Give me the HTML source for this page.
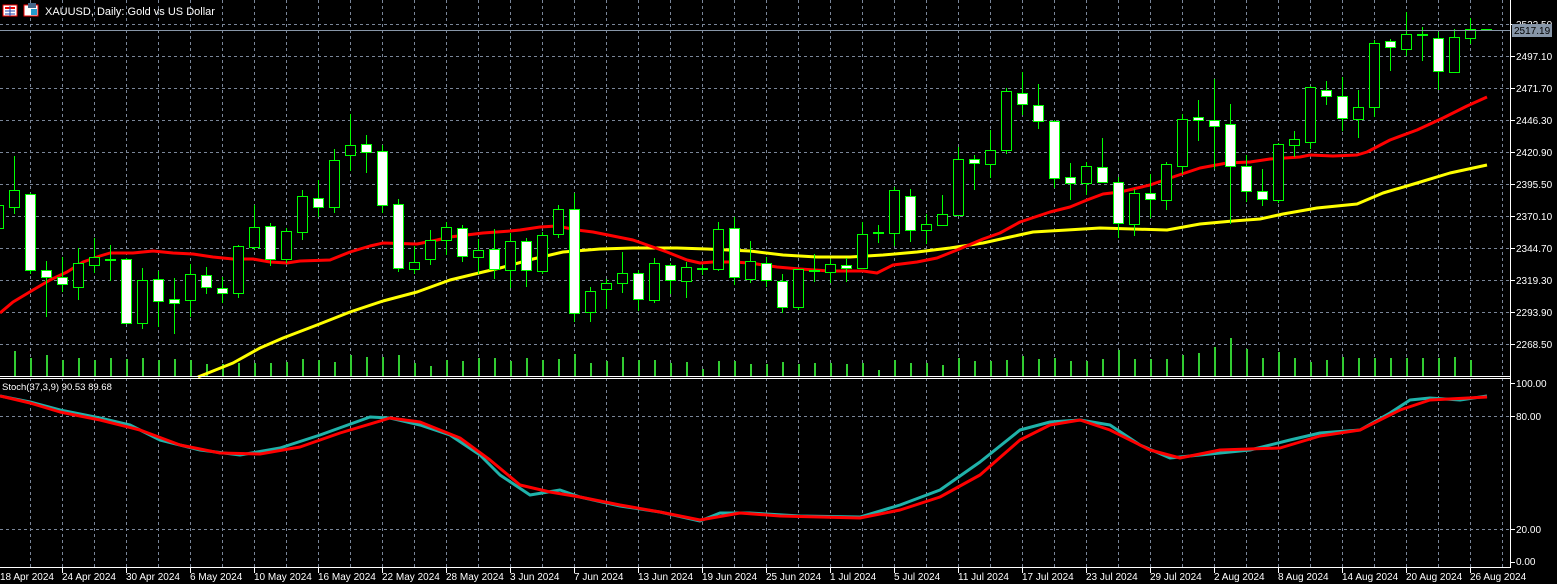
<!DOCTYPE html>
<html><head><meta charset="utf-8"><style>
html,body{margin:0;padding:0;background:#000;width:1557px;height:584px;overflow:hidden}
svg{display:block}
text{font-family:"Liberation Sans",sans-serif;font-size:10px;fill:#fff}
</style></head><body>
<svg id="s" width="1557" height="584" xmlns="http://www.w3.org/2000/svg">
<rect width="1557" height="584" fill="#000"/>
<g id="grid"></g>
<g id="vol"></g>
<g id="ma"></g>
<g id="cnd"></g>
<g id="st"></g>
<!-- current price line -->
<line x1="0" y1="30.5" x2="1510" y2="30.5" stroke="#8796a8" stroke-width="1"/>
<!-- panel borders -->
<line x1="0" y1="376.5" x2="1511" y2="376.5" stroke="#fff"/>
<line x1="0" y1="378.5" x2="1511" y2="378.5" stroke="#fff"/>
<line x1="0" y1="567.5" x2="1511" y2="567.5" stroke="#fff"/>
<line x1="1510.5" y1="0" x2="1510.5" y2="568" stroke="#fff"/>
<!-- title -->
<g>
<rect x="3" y="5" width="14" height="11" fill="#fff" stroke="#e00" stroke-width="1"/>
<line x1="5" y1="8" x2="15" y2="8" stroke="#e00" stroke-width="2"/><line x1="5" y1="11" x2="15" y2="11" stroke="#24a"/><line x1="5" y1="14" x2="15" y2="14" stroke="#24a"/>
<line x1="10" y1="6" x2="10" y2="16" stroke="#24a"/>
<rect x="24" y="5" width="14" height="11" fill="#fff" stroke="#e00"/>
<rect x="28" y="3" width="8" height="5" fill="#468"/>
<rect x="31" y="9" width="6" height="6" fill="#29c"/>
</g>
<text x="45" y="15" style="font-size:11px">XAUUSD, Daily:  Gold vs US Dollar</text>
<text x="2" y="390" style="font-size:9.5px">Stoch(37,3,9) 90.53 89.68</text>
<!-- price axis -->
<g id="pax"></g>
<text x="1516" y="28">2522.50</text>
<text x="1516" y="60">2497.10</text>
<text x="1516" y="92">2471.70</text>
<text x="1516" y="124">2446.30</text>
<text x="1516" y="156">2420.90</text>
<text x="1516" y="188">2395.50</text>
<text x="1516" y="220">2370.10</text>
<text x="1516" y="252">2344.70</text>
<text x="1516" y="284">2319.30</text>
<text x="1516" y="316">2293.90</text>
<text x="1516" y="348">2268.50</text>
<rect x="1512" y="24" width="40" height="13" fill="#8796a8"/>
<text x="1514" y="34" style="fill:#000">2517.19</text>
<text x="1516" y="387">100.00</text>
<text x="1516" y="420">80.00</text>
<text x="1516" y="533">20.00</text>
<text x="1516" y="565">0.00</text>
<!-- date axis -->
<g id="dax"></g>
<text x="0" y="580">18 Apr 2024</text>
<text x="62" y="580">24 Apr 2024</text>
<text x="126" y="580">30 Apr 2024</text>
<text x="190" y="580">6 May 2024</text>
<text x="254" y="580">10 May 2024</text>
<text x="318" y="580">16 May 2024</text>
<text x="382" y="580">22 May 2024</text>
<text x="446" y="580">28 May 2024</text>
<text x="510" y="580">3 Jun 2024</text>
<text x="574" y="580">7 Jun 2024</text>
<text x="638" y="580">13 Jun 2024</text>
<text x="702" y="580">19 Jun 2024</text>
<text x="766" y="580">25 Jun 2024</text>
<text x="830" y="580">1 Jul 2024</text>
<text x="894" y="580">5 Jul 2024</text>
<text x="958" y="580">11 Jul 2024</text>
<text x="1022" y="580">17 Jul 2024</text>
<text x="1086" y="580">23 Jul 2024</text>
<text x="1150" y="580">29 Jul 2024</text>
<text x="1214" y="580">2 Aug 2024</text>
<text x="1278" y="580">8 Aug 2024</text>
<text x="1342" y="580">14 Aug 2024</text>
<text x="1406" y="580">20 Aug 2024</text>
<text x="1470" y="580">26 Aug 2024</text>
</svg>
<script>
var NS="http://www.w3.org/2000/svg";
function el(p,t,a){var e=document.createElementNS(NS,t);for(var k in a)e.setAttribute(k,a[k]);document.getElementById(p).appendChild(e);return e;}
var gc="#7a8699";
// vertical grid
for(var x=30;x<1510;x+=32){el("grid","line",{x1:x+.5,y1:0,x2:x+.5,y2:567,stroke:gc,"stroke-dasharray":"3,3"});}
// horizontal grid main
for(var y=24;y<=344;y+=32){el("grid","line",{x1:0,y1:y+.5,x2:1510,y2:y+.5,stroke:gc,"stroke-dasharray":"3,3"});
 el("pax","line",{x1:1510,y1:y+.5,x2:1515,y2:y+.5,stroke:"#fff"});}
[416,529].forEach(function(y){el("grid","line",{x1:0,y1:y+.5,x2:1510,y2:y+.5,stroke:gc,"stroke-dasharray":"3,3"});el("pax","line",{x1:1510,y1:y+.5,x2:1515,y2:y+.5,stroke:"#fff"});});
[383,562].forEach(function(y){el("pax","line",{x1:1510,y1:y+.5,x2:1515,y2:y+.5,stroke:"#fff"});});
for(var x=62;x<1510;x+=64){el("dax","line",{x1:x+.5,y1:567,x2:x+.5,y2:573,stroke:"#fff"});}
// volume
var vol={"-2":352,14:351,30:358,46:355,62:360,78:358,94:360,110:358,126:359,142:358,158:360,174:359,190:360,206:364,222:364,238:363,254:363,270:363,286:362,302:359,318:360,334:362,350:355,366:357,382:357,398:355,414:363,430:366,446:360,462:361,478:358,494:358,510:361,526:358,542:360,558:359,574:354,590:363,606:361,622:357,638:360,654:360,670:363,686:362,702:369,718:361,734:361,750:364,766:364,782:362,798:364,814:363,830:363,846:364,862:363,878:370,894:360,910:363,926:363,942:365,958:358,974:361,990:361,1006:360,1022:356,1038:359,1054:358,1070:361,1086:361,1102:359,1118:350,1134:359,1150:359,1166:359,1182:355,1198:353,1214:347,1230:338,1246:349,1262:358,1278:352,1294:358,1310:362,1326:360,1342:357,1358:358,1374:358,1390:358,1406:358,1422:358,1438:358,1454:357,1470:360};
for(var k in vol){el("vol","rect",{x:+k,y:vol[k],width:2,height:376-vol[k],fill:"#32cd32"});}
// MAs
function pl(g,pts,c,w){el(g,"polyline",{points:pts.map(function(p){return p.join(",")}).join(" "),fill:"none",stroke:c,"stroke-width":w,"stroke-linejoin":"round"});}
var yel=[[198,377],[233,363],[260,348],[283,338],[317,325],[350,312],[383,301],[417,292],[450,280],[483,272],[500,268],[533,259],[563,252],[600,249],[633,248],[677,248],[707,249],[750,251],[783,255],[817,257],[850,257],[883,255],[917,252],[950,248],[983,243],[1010,237],[1033,232],[1067,230],[1100,228],[1133,229],[1167,230],[1200,224],[1233,221],[1260,219],[1283,214],[1317,208],[1357,204],[1383,193],[1417,183],[1450,173],[1487,165]];
var red=[[0,313],[13,302],[33,290],[50,280],[67,272],[83,262],[100,256],[110,253],[133,253],[153,251],[173,253],[193,254],[213,257],[233,259],[253,259],[270,262],[287,263],[300,261],[330,260],[350,252],[370,246],[383,243],[417,244],[437,240],[450,237],[483,233],[510,231],[520,230],[540,227],[557,226],[577,230],[593,232],[613,236],[633,240],[650,246],[667,252],[687,260],[700,263],[713,262],[733,262],[750,263],[777,267],[800,269],[830,271],[863,271],[877,273],[893,265],[917,262],[937,258],[957,250],[983,239],[1000,233],[1020,222],[1050,212],[1070,207],[1087,200],[1103,194],[1120,192],[1150,185],[1173,177],[1200,168],[1227,163],[1250,162],[1270,159],[1300,157],[1310,155],[1333,156],[1357,155],[1367,152],[1390,140],[1417,130],[1443,118],[1467,106],[1487,97]];
pl("ma",yel,"#ffff00",3);pl("ma",red,"#ff0000",3);
// candles [x,high,low,top,bot,type]
var C=[[-2,200,232,205,228,"b"],[14,156,213,190,207,"b"],[30,193,273,194,270,"w"],[46,261,316,270,277,"w"],[62,257,291,277,284,"w"],[78,248,299,263,287,"b"],[94,238,272,257,265,"b"],[110,245,280,260,260,"d"],[126,258,323,259,323,"w"],[142,268,328,280,323,"b"],[158,271,326,279,301,"w"],[174,278,333,299,303,"w"],[190,264,316,274,300,"b"],[206,267,293,275,287,"w"],[222,277,302,288,293,"w"],[238,245,297,246,293,"b"],[254,205,249,227,247,"b"],[270,223,265,226,259,"w"],[286,228,262,231,259,"b"],[302,190,239,196,232,"b"],[318,180,216,198,207,"w"],[334,149,212,160,207,"b"],[350,114,170,145,155,"b"],[366,135,172,144,152,"w"],[382,145,212,151,205,"w"],[398,199,271,204,268,"w"],[414,246,273,262,269,"b"],[430,230,264,240,259,"b"],[446,222,254,227,240,"b"],[462,225,261,228,256,"w"],[478,239,273,250,257,"b"],[494,229,278,249,269,"w"],[510,233,287,241,270,"b"],[526,238,286,241,270,"w"],[542,232,273,235,271,"b"],[558,205,237,209,234,"b"],[574,193,321,209,313,"w"],[590,287,321,291,312,"b"],[606,279,308,283,289,"b"],[622,252,292,273,283,"b"],[638,270,310,273,299,"w"],[654,258,302,263,300,"b"],[670,263,293,265,280,"w"],[686,262,297,267,281,"b"],[702,265,274,269,269,"d"],[718,222,270,229,269,"b"],[734,217,284,228,277,"w"],[750,241,282,261,279,"b"],[766,257,286,263,280,"w"],[782,274,312,281,307,"w"],[798,269,309,269,307,"b"],[814,254,281,271,271,"d"],[830,259,282,264,272,"b"],[846,258,281,265,268,"w"],[862,222,268,234,268,"b"],[878,225,242,233,233,"d"],[894,187,245,190,233,"b"],[910,189,241,196,230,"w"],[926,214,243,224,230,"b"],[942,195,225,214,225,"b"],[958,147,215,159,215,"b"],[974,155,189,159,163,"w"],[990,130,177,150,164,"b"],[1006,88,153,91,150,"b"],[1022,72,114,93,104,"w"],[1038,84,128,105,121,"w"],[1054,120,187,121,178,"w"],[1070,163,199,177,183,"w"],[1086,162,194,166,183,"b"],[1102,138,182,167,182,"w"],[1118,177,237,182,223,"w"],[1134,189,235,193,224,"b"],[1150,174,217,193,199,"w"],[1166,162,209,164,200,"b"],[1182,114,173,119,166,"b"],[1198,100,140,117,120,"w"],[1214,79,168,120,126,"w"],[1230,104,223,124,166,"w"],[1246,155,201,166,191,"w"],[1262,169,205,191,199,"w"],[1278,143,202,144,200,"b"],[1294,131,156,139,145,"b"],[1310,86,148,87,142,"b"],[1326,81,104,90,96,"w"],[1342,77,130,96,118,"w"],[1358,90,137,107,119,"b"],[1374,40,116,43,107,"b"],[1390,39,70,41,47,"w"],[1406,12,55,34,49,"b"],[1422,27,60,35,35,"d"],[1438,32,89,38,71,"w"],[1454,29,72,37,72,"b"],[1470,18,43,29,38,"b"],[1486,30,30,30,30,"n"]];
C.forEach(function(c){var x=c[0],g="#00ff00";
 if(c[5]=="n"){el("cnd","rect",{x:x-5,y:c[3]-1,width:11,height:2,fill:g});return;}
 el("cnd","line",{x1:x+.5,y1:c[1],x2:x+.5,y2:c[2]+1,stroke:g});
 if(c[5]=="d"){el("cnd","rect",{x:x-5,y:c[3]-1,width:11,height:2,fill:g});return;}
 var h=Math.max(c[4]-c[3],2);
 el("cnd","rect",{x:x-4.5,y:c[3]+.5,width:10,height:h,fill:c[5]=="w"?"#fff":"#000",stroke:g});
});
// stochastic
var tl=[[0,396],[30,402],[60,410],[100,418],[130,425],[160,440],[200,450],[240,455],[280,448],[320,435],[370,417],[390,418],[420,425],[450,435],[480,455],[500,475],[530,495],[560,490],[580,497],[620,506],[660,512],[700,521],[720,513],[750,513],[800,516],[860,517],[900,505],[940,490],[980,462],[1020,430],[1050,422],[1080,420],[1110,425],[1140,445],[1170,458],[1200,455],[1250,450],[1290,440],[1320,433],[1360,430],[1390,413],[1410,400],[1430,398],[1460,400],[1487,396]];
var rd=[[0,396],[30,403],[60,412],[100,420],[140,430],[180,445],[220,453],[260,454],[300,447],[340,433],[390,418],[420,422],[460,438],[490,460],[520,485],[550,492],[580,497],[620,505],[660,512],[700,520],[740,513],[780,516],[860,518],[900,510],[940,497],[980,475],[1020,440],[1050,425],[1080,420],[1110,430],[1150,450],[1180,458],[1220,450],[1280,448],[1320,436],[1360,430],[1400,410],[1430,400],[1487,397]];
pl("st",tl,"#20b2aa",3);pl("st",rd,"#ff0000",3);
</script>
</body></html>
